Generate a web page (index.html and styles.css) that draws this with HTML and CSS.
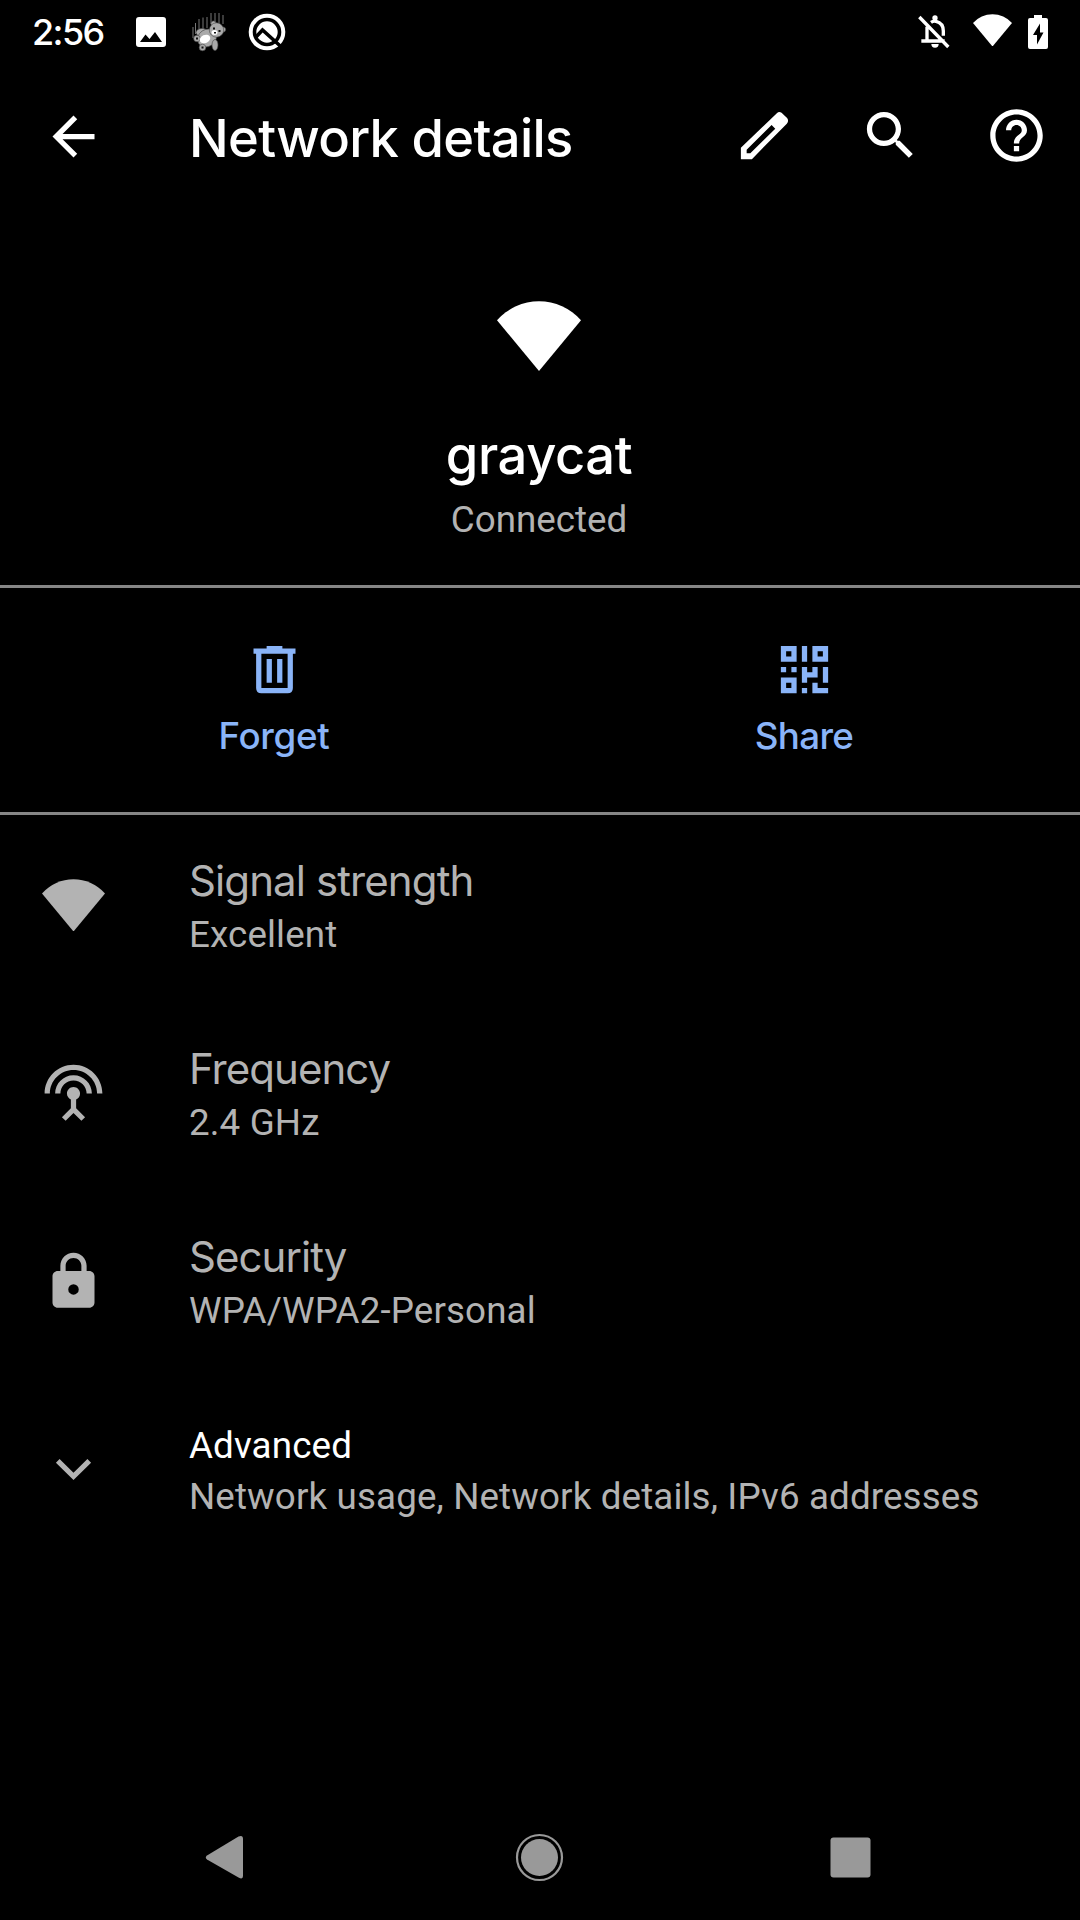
FILE: index.html
```html
<!DOCTYPE html>
<html lang="en">
<head>
<meta charset="utf-8">
<title>Network details</title>
<link rel="stylesheet" href="styles.css">
</head>
<body>
<svg class="defs" aria-hidden="true">
  <symbol id="wifi" viewBox="0 0 24 20"><path d="M0 5.5A16 16 0 0 1 24 5.5L12 20z"/></symbol>
</svg>
<div class="screen">
  <header class="status-bar">
    <span class="clock">2:56</span>
    <div class="notifications">
      <svg class="image-icon" viewBox="0 0 30 30"><path fill-rule="evenodd" d="M3 0H27Q30 0 30 3V27Q30 30 27 30H3Q0 30 0 27V3Q0 0 3 0zM4 25H26L19 15 13.500 22 9.500 17.500z"/></svg>
      <svg class="bear-icon" viewBox="0 0 38 40">
        <path class="speed-lines" d="M3 26V15M5.500 22V11M9 19V7M13 18V5.500M17 16V5M21 12V1M25 10V1M29 11V1M33 12V3"/>
        <g class="bear">
          <ellipse cx="12" cy="20.500" rx="6" ry="4"/>
          <ellipse cx="17" cy="26" rx="10" ry="8.500" transform="rotate(-35 17 26)"/>
          <ellipse cx="25" cy="33" rx="3" ry="5.500"/>
          <circle cx="23.500" cy="11.500" r="2.600"/>
          <circle cx="33" cy="17.500" r="2.600"/>
          <circle cx="26.500" cy="18" r="7.200"/>
          <circle cx="7" cy="26.500" r="3.300"/>
          <circle cx="12.500" cy="35.500" r="3.300"/>
        </g>
        <ellipse class="belly" cx="15" cy="27" rx="5.500" ry="4" transform="rotate(-25 15 27)"/>
        <ellipse class="belly" cx="24.500" cy="20.500" rx="3" ry="2.500"/>
        <path class="face" d="M23 15.500h2v2h-2zM28.500 18h2v2h-2zM24 20h2v1.500h-2zM6 25.500h2v2H6zM11.500 34.500h2v2h-2z"/>
      </svg>
      <svg class="q-icon" viewBox="-19 -19 38 38">
        <circle r="18.300" fill="currentColor"/>
        <circle class="q-cut" r="12.500"/>
        <path class="q-cut" d="M-11 5L-4.500-2 15.500 16"/>
      </svg>
    </div>
    <div class="system-icons">
      <svg class="bell-icon" viewBox="113 44 102 104">
        <path class="bell-line" d="M143 82V125M126 125H196M155 69Q162 64 170 66 192 71 192 95V109M120 53L207 143"/>
        <circle cx="167" cy="56" r="8"/>
        <path d="M156 134H178A11 11 0 0 1 156 134z"/>
      </svg>
      <svg class="wifi-status"><use href="#wifi"/></svg>
      <svg class="battery-icon" viewBox="0 0 20 34"><path fill-rule="evenodd" d="M6 0H14V3H18Q20 3 20 5V32Q20 34 18 34H2Q0 34 0 32V5Q0 3 2 3H6zM12 8.500L5 20H9V29.500L15.500 17.500H12z"/></svg>
    </div>
  </header>

  <nav class="app-bar">
    <svg class="icon back" viewBox="0 0 24 24"><path d="M20 11H7.830l5.590-5.590L12 4l-8 8 8 8 1.410-1.410L7.830 13H20v-2z"/></svg>
    <h1>Network details</h1>
    <div class="actions-menu">
      <svg class="icon" viewBox="0 0 24 24"><path fill-rule="evenodd" d="M3 21V16.700L16.700 3.500Q17.500 2.700 18.500 3.300L20.600 5.300Q21.400 6.400 20.500 7.500L7.200 21zM5.200 18.800H6.600L16.100 9.400 14.700 8 5.200 17.400z"/></svg>
      <svg class="icon" viewBox="0 0 24 24"><path d="M15.500 14h-.79l-.28-.27C15.410 12.590 16 11.110 16 9.500 16 5.910 13.090 3 9.500 3S3 5.910 3 9.500 5.910 16 9.500 16c1.610 0 3.090-.59 4.230-1.570l.27.28v.79l5 4.990L20.490 19l-4.990-5zm-6 0C7.010 14 5 11.990 5 9.500S7.010 5 9.500 5 14 7.010 14 9.500 11.990 14 9.500 14z"/></svg>
      <svg class="icon" viewBox="0 0 24 24"><path d="M11 18h2v-2h-2v2zm1-16C6.480 2 2 6.480 2 12s4.480 10 10 10 10-4.480 10-10S17.520 2 12 2zm0 18c-4.410 0-8-3.590-8-8s3.590-8 8-8 8 3.590 8 8-3.590 8-8 8zm0-14c-2.210 0-4 1.790-4 4h2c0-1.100.9-2 2-2s2 .9 2 2c0 2-3 1.750-3 5h2c0-2.250 3-2.500 3-5 0-2.210-1.790-4-4-4z"/></svg>
    </div>
  </nav>

  <section class="network">
    <svg class="network-wifi"><use href="#wifi"/></svg>
    <h2>graycat</h2>
    <p>Connected</p>
  </section>

  <section class="buttons">
    <div class="button">
      <svg class="icon" viewBox="0 0 24 24"><path fill-rule="evenodd" d="M9 3H15V4H20V6H19V19Q19 21 17 21H7Q5 21 5 19V6H4V4H9zM7 6V19H17V6zM9 8H11V17H9zM13 8H15V17H13z"/></svg>
      <span>Forget</span>
    </div>
    <div class="button">
      <svg class="icon" viewBox="0 0 24 24"><path fill-rule="evenodd" d="M3 3H9V9H3zM5 5V7H7V5zM11 3H13V9H11zM15 3H21V9H15zM17 5V7H19V5zM3 11H5V13H3zM7 11H9V13H7zM3 15H9V21H3zM5 17V19H7V17zM11 11H13V13H15V11H17V15H13V17H11zM19 11H21V17H19zM11 19H13V21H11zM15 17H17V19H21V21H15z"/></svg>
      <span class="share">Share</span>
    </div>
  </section>

  <main class="preferences">
    <div class="row">
      <svg class="icon row-wifi"><use href="#wifi"/></svg>
      <div class="text"><h3 class="signal">Signal strength</h3><p>Excellent</p></div>
    </div>
    <div class="row">
      <svg class="icon" viewBox="0 0 24 24"><path d="M12 5c-3.870 0-7 3.130-7 7h2c0-2.760 2.240-5 5-5s5 2.240 5 5h2c0-3.870-3.130-7-7-7zm1 9.290c.88-.39 1.500-1.260 1.500-2.290 0-1.380-1.120-2.500-2.500-2.500S9.500 10.620 9.500 12c0 1.020.62 1.900 1.500 2.290v3.300L7.590 21 9 22.410l3-3 3 3L16.410 21 13 17.590v-3.300zM12 1C5.930 1 1 5.930 1 12h2c0-4.970 4.030-9 9-9s9 4.030 9 9h2c0-6.070-4.930-11-11-11z"/></svg>
      <div class="text"><h3>Frequency</h3><p>2.4 GHz</p></div>
    </div>
    <div class="row">
      <svg class="icon" viewBox="0 0 24 24"><path fill-rule="evenodd" d="M18 8h-1V6c0-2.760-2.240-5-5-5S7 3.240 7 6v2H6c-1.100 0-2 .9-2 2v10c0 1.100.9 2 2 2h12c1.100 0 2-.9 2-2V10c0-1.100-.9-2-2-2zM9 6c0-1.660 1.340-3 3-3s3 1.340 3 3v2H9V6zM12 13a2 2 0 1 0 0 4 2 2 0 0 0 0-4z"/></svg>
      <div class="text"><h3>Security</h3><p>WPA/WPA2-Personal</p></div>
    </div>
    <div class="row advanced">
      <svg class="icon" viewBox="0 0 24 24"><path d="M6.700 8L12 13.200 17.300 8 18.700 9.400 12 16 5.300 9.400z"/></svg>
      <div class="text"><h3>Advanced</h3><p>Network usage, Network details, IPv6 addresses</p></div>
    </div>
  </main>

  <footer class="nav-bar">
    <svg viewBox="0 0 63 63"><path d="M12 29.500L43.500 10.500Q48 8.500 48 13V50Q48 54 43.500 51.500L12 33.500Q9.500 31.500 12 29.500z"/></svg>
    <svg viewBox="0 0 63 63"><circle cx="31.500" cy="31.500" r="18.500"/><circle class="home-ring" cx="31.500" cy="31.500" r="22.500"/></svg>
    <svg viewBox="0 0 63 63"><rect x="10.500" y="11.500" width="40" height="40" rx="3"/></svg>
  </footer>
</div>
</body>
</html>
```
FILE: styles.css
```css
* { box-sizing: border-box; margin: 0; padding: 0; }

body {
  background: #000;
  color: #fff;
  font-family: Roboto, sans-serif;
  font-size: 36.75px;
}

svg { display: block; flex: none; fill: currentColor; }
.defs { display: none; }
.icon { width: 63px; height: 63px; }

.screen {
  width: 1080px;
  height: 1920px;
  display: flex;
  flex-direction: column;
}

h1, h2, h3, .clock, .button span {
  font-family: Inter, sans-serif;
  font-weight: 500;
  white-space: nowrap;
}

/* Status bar */
.status-bar {
  height: 63px;
  display: flex;
  align-items: center;
  padding: 0 32px 0 31px;
}
.clock { width: 105px; font-size: 36px; letter-spacing: -1.6px; padding-left: 1px; }
.notifications { display: flex; align-items: center; }
.image-icon { width: 30px; height: 30px; }
.bear-icon { width: 38px; height: 40px; margin: 0 20px 0 24px; }
.q-icon { width: 38px; height: 38px; }
.speed-lines { fill: none; stroke: #777; stroke-width: 1; }
.bear { fill: #aaa; stroke: #444; stroke-width: .6; }
.belly { fill: #fff; }
.face { fill: #111; }
.q-cut { fill: none; stroke: #000; stroke-width: 3.6; }
.system-icons { display: flex; align-items: center; margin-left: auto; }
.bell-icon { width: 34px; height: 34.7px; }
.bell-line { fill: none; stroke: currentColor; stroke-width: 10; }
.wifi-status { width: 39px; height: 32.5px; margin: -3px 16px 0 22px; }
.battery-icon { width: 20px; height: 34px; }

/* App bar */
.app-bar {
  height: 147px;
  display: flex;
  align-items: center;
  padding: 0 32px 0 42px;
}
.app-bar h1 { margin: 2px 0 0 84px; font-size: 52.5px; letter-spacing: -.7px; }
.actions-menu { display: flex; gap: 63px; margin: -2px 0 0 auto; }

/* Network header */
.network {
  height: 378px;
  display: flex;
  flex-direction: column;
  align-items: center;
  padding: 91px 2px 0 0;
  border-bottom: 3px solid #868686;
}
.network-wifi { width: 84px; height: 70px; }
.network h2 { margin-top: 52px; font-size: 52.5px; line-height: 64px; letter-spacing: -.4px; }
.network p { margin-top: 11px; line-height: 44px; color: #b3b3b3; }

/* Forget / Share */
.buttons {
  height: 227px;
  display: grid;
  grid-template-columns: 1fr 1fr;
  padding: 50px 11px 0 9px;
  border-bottom: 3px solid #868686;
  color: #8ab4f8;
}
.button { display: flex; flex-direction: column; align-items: center; gap: 13px; }
.button span { line-height: 44px; letter-spacing: -.3px; }
.button .share { letter-spacing: -.7px; }

/* Preference rows */
.preferences { flex: 1; color: #b3b3b3; }
.row { height: 188px; display: flex; padding-left: 42px; }
.row .icon { margin-top: 59px; }
.row .row-wifi { height: 52.5px; margin-top: 63.5px; }
.text { margin-left: 84px; padding-top: 39px; }
.text h3 { font-weight: 400; font-size: 42px; line-height: 54px; letter-spacing: -.95px; }
.text .signal { letter-spacing: -.9px; }
.text p { line-height: 54px; letter-spacing: .13px; white-space: nowrap; }
.advanced .text { padding-top: 41px; }
.advanced h3 {
  font-family: Roboto, sans-serif;
  font-size: inherit;
  line-height: 51px;
  letter-spacing: .13px;
  color: #fff;
}
.advanced p { line-height: 51px; }

/* Navigation bar */
.nav-bar {
  height: 126px;
  display: flex;
  align-items: center;
  justify-content: space-between;
  padding: 0 197px 0 195px;
  color: #999;
}
.nav-bar svg { width: 63px; height: 63px; }
.home-ring { fill: none; stroke: currentColor; stroke-width: 2.2; }
```
